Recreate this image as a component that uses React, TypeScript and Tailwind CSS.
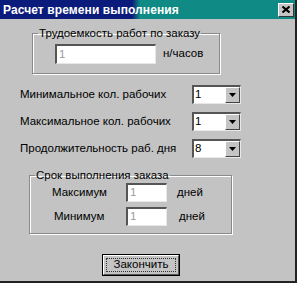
import React from "react";

const font = { fontFamily: '"Liberation Sans", Arial, sans-serif' };

function Sunken({ w, h, value, gray }: { w: number; h: number; value: string; gray?: boolean }) {
  return (
    <div
      className="bg-white border-t-2 border-l-2 border-t-[#555] border-l-[#555] border-b border-r border-b-[#e8e8e8] border-r-[#e8e8e8] flex items-center pl-[2px] text-[11.5px] leading-none"
      style={{ width: w, height: h, color: gray ? "#9a9a9a" : "#000" }}
    >
      {value}
    </div>
  );
}

function Combo({ value }: { value: string }) {
  return (
    <div className="w-[49px] h-[19px] bg-white border-t-2 border-l-2 border-t-[#555] border-l-[#555] border-b border-r border-b-[#e8e8e8] border-r-[#e8e8e8] flex items-stretch">
      <div className="flex-1 flex items-center pl-[1px] text-[11.5px] leading-none text-black">{value}</div>
      <div className="w-[15px] bg-[#c4c4c4] border-t border-l border-t-white border-l-white border-b border-r border-b-[#444] border-r-[#444] flex items-center justify-center">
        <svg width="7" height="4" viewBox="0 0 7 4"><path d="M0 0H7L3.5 4Z" fill="#000" /></svg>
      </div>
    </div>
  );
}

export default function App() {
  return (
    <div className="w-[298px] h-[285px] bg-white" style={font}>
      <div className="w-[297px] h-[283px] bg-[#c3c3c3] border-r-2 border-b-2 border-r-[#222] border-b-[#222] flex flex-col">
        <div className="h-[19px] flex items-center justify-between pl-[3px] pr-[1px] bg-[linear-gradient(90deg,#0b1b7c_0px,#0b1b7c_132px,#0f8a84_140px,#0f8a84_100%)]">
          <span className="text-white font-bold text-[12px] leading-none tracking-[0.1px]">Расчет времени выполнения</span>
          <div className="w-[16px] h-[14px] bg-[#c4c4c4] border-t border-l border-t-white border-l-white border-b border-r border-b-[#333] border-r-[#333] flex items-center justify-center">
            <svg width="8" height="7" viewBox="0 0 8 7"><path d="M0.5 0.5L7.5 6.5M7.5 0.5L0.5 6.5" stroke="#000" strokeWidth="2" /></svg>
          </div>
        </div>

        <fieldset className="mt-[7px] ml-[32px] w-[188px] h-[48px] border border-[#8a8a8a] shadow-[inset_1px_1px_0_#fff,1px_1px_0_#fff]">
          <legend className="ml-[5px] px-[1px] text-[11.5px] leading-[14px] text-black">Трудоемкость работ по заказу</legend>
          <div className="flex items-center mt-[4px] ml-[22px]">
            <Sunken w={101} h={20} value="1" gray />
            <span className="ml-[7px] text-[11.5px] leading-none text-black">н/часов</span>
          </div>
        </fieldset>

        <div className="mt-[11px] ml-[20px] flex flex-col gap-[8px] text-[11.5px] text-black">
          <div className="flex items-center justify-between w-[221px] h-[19px]">
            <span>Минимальное кол. рабочих</span>
            <Combo value="1" />
          </div>
          <div className="flex items-center justify-between w-[221px] h-[19px]">
            <span>Максимальное кол. рабочих</span>
            <Combo value="1" />
          </div>
          <div className="flex items-center justify-between w-[221px] h-[19px]">
            <span>Продолжительность раб. дня</span>
            <Combo value="8" />
          </div>
        </div>

        <fieldset className="mt-[10px] ml-[29px] w-[203px] h-[66px] border border-[#8a8a8a] shadow-[inset_1px_1px_0_#fff,1px_1px_0_#fff]">
          <legend className="ml-[5px] px-[1px] text-[11.5px] leading-[14px] text-black">Срок выполнения заказа</legend>
          <div className="flex flex-col gap-[5px] mt-[1px] text-[11.5px] text-black">
            <div className="flex items-center">
              <span className="ml-[22px] w-[74px]">Максимум</span>
              <Sunken w={41} h={19} value="1" gray />
              <span className="ml-[10px]">дней</span>
            </div>
            <div className="flex items-center">
              <span className="ml-[24px] w-[72px]">Минимум</span>
              <Sunken w={41} h={19} value="1" gray />
              <span className="ml-[12px]">дней</span>
            </div>
          </div>
        </fieldset>

        <div className="mt-[20px] ml-[102px] w-[78px] h-[22px] border border-black">
          <div className="w-full h-full bg-[#c4c4c4] border-t border-l border-t-white border-l-white border-b border-r border-b-[#555] border-r-[#555] p-[2px]">
            <div className="w-full h-full border border-dotted border-[#333] flex items-center justify-center text-[11.5px] leading-none text-black">
              Закончить
            </div>
          </div>
        </div>
      </div>
    </div>
  );
}
